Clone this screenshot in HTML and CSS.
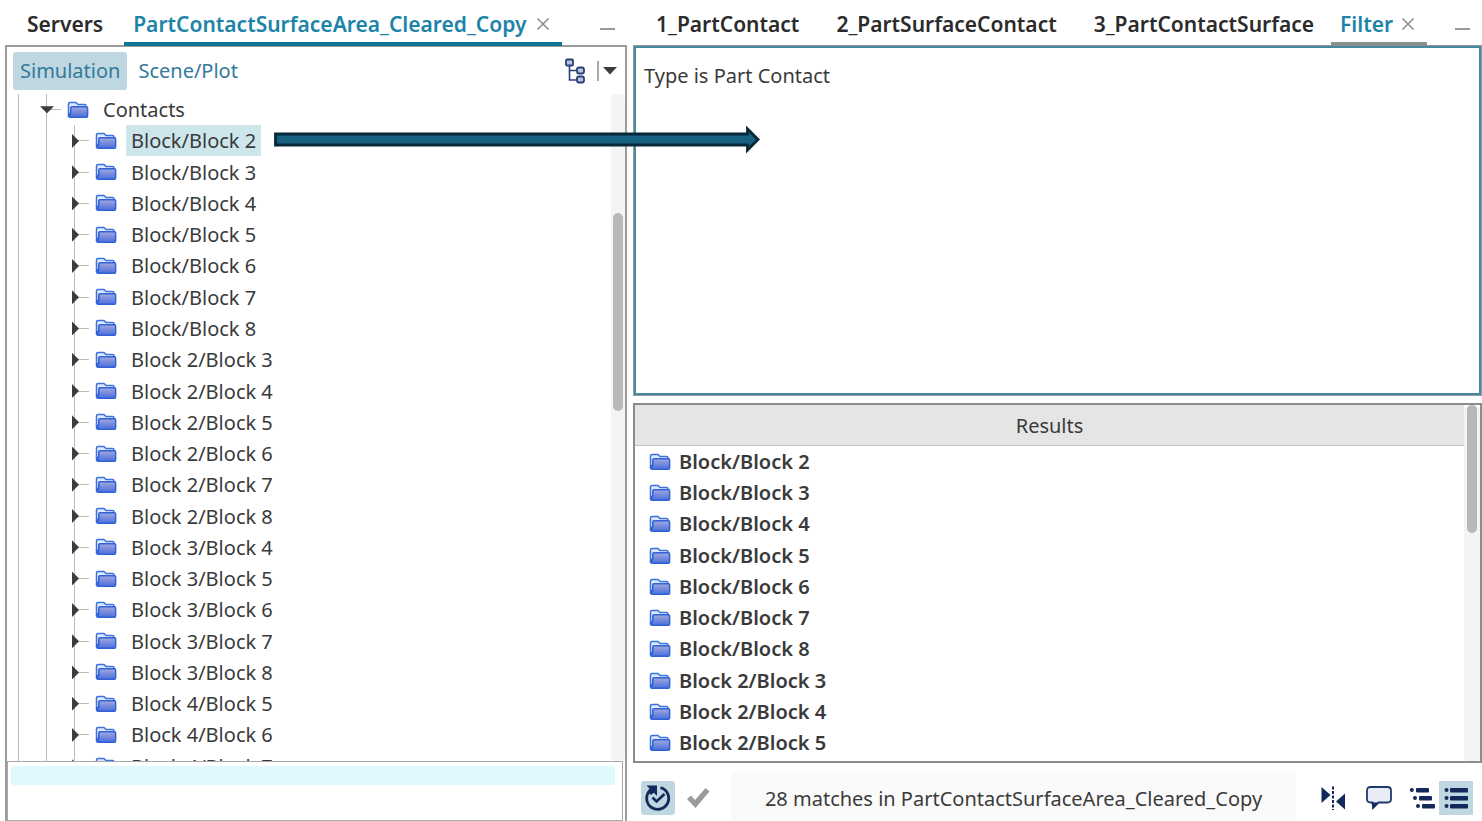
FILE: index.html
```
<!DOCTYPE html>
<html lang="en">
<head>
<meta charset="utf-8">
<title>Simulation filter</title>
<link rel="stylesheet" href="styles.css">
</head>
<body>
<svg class="defs" aria-hidden="true">
  <defs>
    <linearGradient id="folder-front" x1="0" y1="0" x2="0" y2="1">
      <stop offset="0" stop-color="#a3a8dc"/>
      <stop offset="1" stop-color="#4a6fdc"/>
    </linearGradient>
    <symbol id="folder" viewBox="0 0 22 18">
      <path d="M1.500 14.500V3Q1.500 1.500 3 1.500H9L11 3.500H17.500Q19 3.500 19 5V14.500Z" fill="#dfe9fd" stroke="#3c72df" stroke-width="1.500"/>
      <path d="M1.500 13L4 10V15H1.500Z" fill="#2f62d6"/>
      <path d="M5 5.800H19.500Q20.600 5.800 20.600 7V15Q20.600 16.300 19.400 16.300H3Q1.800 16.300 1.600 15Q3.800 14 3.800 12V7Q3.800 5.800 5 5.800Z" fill="url(#folder-front)" stroke="#2f62d6" stroke-width="1.500"/>
    </symbol>
    <symbol id="close" viewBox="0 0 14 14">
      <path d="M1.500 1.500L12.500 12.500M12.500 1.500L1.500 12.500" fill="none" stroke="#8c8c8c" stroke-width="1.500"/>
    </symbol>
  </defs>
</svg>

<main class="workspace">
  <section class="pane" aria-label="Simulation">
    <div class="tabs tabs-left">
      <button class="tab">Servers</button>
      <div class="tab-active">
        <button class="tab">PartContactSurfaceArea_Cleared_Copy</button>
        <button class="icon-button" aria-label="Close tab"><svg class="close-icon"><use href="#close"/></svg></button>
      </div>
      <button class="minimize" aria-label="Minimize"></button>
    </div>
    <div class="explorer">
      <div class="toolbar">
        <button class="mode mode-on">Simulation</button>
        <button class="mode">Scene/Plot</button>
        <button class="icon-button tree-button" aria-label="Tree layout">
          <svg width="20" height="26" viewBox="0 0 20 26" fill="#b9c3da" stroke="#2a4279" stroke-width="1.800">
            <path d="M4.500 7V22H12M4.500 12.500H12" fill="none" stroke-width="1.600"/>
            <rect x="1" y="1.500" width="7" height="6" rx="1"/>
            <rect x="12" y="9.500" width="7" height="6" rx="2"/>
            <rect x="12" y="18.500" width="7" height="6" rx="2"/>
          </svg>
        </button>
        <button class="icon-button menu-button" aria-label="More options">
          <svg width="14" height="8" viewBox="0 0 14 8"><path d="M0 0H14L7 7.500Z" fill="#3c3c3c"/></svg>
        </button>
      </div>
      <div class="tree-area">
        <ul class="tree">
          <li class="node parent"><button class="open" aria-label="Collapse"></button><svg class="folder"><use href="#folder"/></svg><span>Contacts</span></li>
          <li class="node"><button class="twist" aria-label="Expand"></button><svg class="folder"><use href="#folder"/></svg><span class="selected">Block/Block 2</span></li>
          <li class="node"><button class="twist" aria-label="Expand"></button><svg class="folder"><use href="#folder"/></svg><span>Block/Block 3</span></li>
          <li class="node"><button class="twist" aria-label="Expand"></button><svg class="folder"><use href="#folder"/></svg><span>Block/Block 4</span></li>
          <li class="node"><button class="twist" aria-label="Expand"></button><svg class="folder"><use href="#folder"/></svg><span>Block/Block 5</span></li>
          <li class="node"><button class="twist" aria-label="Expand"></button><svg class="folder"><use href="#folder"/></svg><span>Block/Block 6</span></li>
          <li class="node"><button class="twist" aria-label="Expand"></button><svg class="folder"><use href="#folder"/></svg><span>Block/Block 7</span></li>
          <li class="node"><button class="twist" aria-label="Expand"></button><svg class="folder"><use href="#folder"/></svg><span>Block/Block 8</span></li>
          <li class="node"><button class="twist" aria-label="Expand"></button><svg class="folder"><use href="#folder"/></svg><span>Block 2/Block 3</span></li>
          <li class="node"><button class="twist" aria-label="Expand"></button><svg class="folder"><use href="#folder"/></svg><span>Block 2/Block 4</span></li>
          <li class="node"><button class="twist" aria-label="Expand"></button><svg class="folder"><use href="#folder"/></svg><span>Block 2/Block 5</span></li>
          <li class="node"><button class="twist" aria-label="Expand"></button><svg class="folder"><use href="#folder"/></svg><span>Block 2/Block 6</span></li>
          <li class="node"><button class="twist" aria-label="Expand"></button><svg class="folder"><use href="#folder"/></svg><span>Block 2/Block 7</span></li>
          <li class="node"><button class="twist" aria-label="Expand"></button><svg class="folder"><use href="#folder"/></svg><span>Block 2/Block 8</span></li>
          <li class="node"><button class="twist" aria-label="Expand"></button><svg class="folder"><use href="#folder"/></svg><span>Block 3/Block 4</span></li>
          <li class="node"><button class="twist" aria-label="Expand"></button><svg class="folder"><use href="#folder"/></svg><span>Block 3/Block 5</span></li>
          <li class="node"><button class="twist" aria-label="Expand"></button><svg class="folder"><use href="#folder"/></svg><span>Block 3/Block 6</span></li>
          <li class="node"><button class="twist" aria-label="Expand"></button><svg class="folder"><use href="#folder"/></svg><span>Block 3/Block 7</span></li>
          <li class="node"><button class="twist" aria-label="Expand"></button><svg class="folder"><use href="#folder"/></svg><span>Block 3/Block 8</span></li>
          <li class="node"><button class="twist" aria-label="Expand"></button><svg class="folder"><use href="#folder"/></svg><span>Block 4/Block 5</span></li>
          <li class="node"><button class="twist" aria-label="Expand"></button><svg class="folder"><use href="#folder"/></svg><span>Block 4/Block 6</span></li>
          <li class="node"><button class="twist" aria-label="Expand"></button><svg class="folder"><use href="#folder"/></svg><span>Block 4/Block 7</span></li>
        </ul>
        <div class="track"><div class="thumb thumb-tree"></div></div>
      </div>
      <div class="properties"><div class="property-head"></div></div>
    </div>
  </section>

  <section class="pane" aria-label="Filter">
    <div class="tabs tabs-right">
      <button class="tab">1_PartContact</button>
      <button class="tab">2_PartSurfaceContact</button>
      <button class="tab">3_PartContactSurface</button>
      <div class="tab-active tab-gray">
        <button class="tab">Filter</button>
        <button class="icon-button" aria-label="Close tab"><svg class="close-icon"><use href="#close"/></svg></button>
      </div>
      <button class="minimize" aria-label="Minimize"></button>
    </div>
    <textarea class="query" aria-label="Filter query" spellcheck="false">Type is Part Contact</textarea>
    <div class="results">
      <div class="results-main">
        <h2 class="results-title">Results</h2>
        <ul class="matches">
          <li><svg class="folder"><use href="#folder"/></svg>Block/Block 2</li>
          <li><svg class="folder"><use href="#folder"/></svg>Block/Block 3</li>
          <li><svg class="folder"><use href="#folder"/></svg>Block/Block 4</li>
          <li><svg class="folder"><use href="#folder"/></svg>Block/Block 5</li>
          <li><svg class="folder"><use href="#folder"/></svg>Block/Block 6</li>
          <li><svg class="folder"><use href="#folder"/></svg>Block/Block 7</li>
          <li><svg class="folder"><use href="#folder"/></svg>Block/Block 8</li>
          <li><svg class="folder"><use href="#folder"/></svg>Block 2/Block 3</li>
          <li><svg class="folder"><use href="#folder"/></svg>Block 2/Block 4</li>
          <li><svg class="folder"><use href="#folder"/></svg>Block 2/Block 5</li>
        </ul>
      </div>
      <div class="track track-results"><div class="thumb thumb-results"></div></div>
    </div>
    <div class="footer">
      <button class="icon-button tool tool-on" aria-label="Auto apply">
        <svg width="28" height="28" viewBox="0 0 28 28" fill="none" stroke="#13295c">
          <path d="M16.500 3.700A11 11 0 1 1 5.700 6.800" stroke-width="2.800"/>
          <path d="M2.500 1.500H13V12L9.800 8.800L7 11L3.500 7.500L5.500 4.500Z" fill="#13295c" stroke="none"/>
          <path d="M8.500 13.500L12.500 17.500L20.500 10" stroke-width="2.600"/>
        </svg>
      </button>
      <button class="icon-button tool" aria-label="Apply">
        <svg width="24" height="22" viewBox="0 0 24 22"><path d="M1 12L5 8.500L9 13L19.500 1L23.500 4.500L9.500 21Z" fill="#9b9b9b"/></svg>
      </button>
      <output class="status">28 matches in PartContactSurfaceArea_Cleared_Copy</output>
      <div class="actions">
        <button class="icon-button tool" aria-label="Mirror">
          <svg width="26" height="26" viewBox="0 0 26 26" fill="#13295c">
            <path d="M1.500 2L10.500 10L1.500 18Z"/><path d="M25 8.500V24.500L16 16.500Z"/>
            <path d="M13 1.500V25" stroke="#13295c" stroke-width="2" stroke-dasharray="3 1.500"/>
          </svg>
        </button>
        <button class="icon-button tool tool-note" aria-label="Comment">
          <svg width="26" height="26" viewBox="0 0 26 26"><path d="M4.500 2H21.500Q25 2 25 5.500V14Q25 17.500 21.500 17.500H12.500L7 23L6.500 17.500H4.500Q1 17.500 1 14V5.500Q1 2 4.500 2Z" fill="#e9ebf6" stroke="#21386f" stroke-width="1.800"/><path d="M6 17.500H12.500L7 23.500Z" fill="#13295c"/></svg>
        </button>
        <button class="icon-button tool" aria-label="Tree view">
          <svg width="26" height="22" viewBox="0 0 26 22" fill="#13295c">
            <circle cx="2.800" cy="3" r="2"/><rect x="7" y="1" width="13" height="4.500" rx="1"/>
            <circle cx="6" cy="11" r="2"/><rect x="10" y="9" width="13" height="4.500" rx="1"/>
            <circle cx="9" cy="19" r="2"/><rect x="13" y="17" width="13" height="4.500" rx="1"/>
          </svg>
        </button>
        <button class="icon-button tool tool-on tool-square" aria-label="List view">
          <svg width="24" height="22" viewBox="0 0 24 22" fill="#13295c">
            <circle cx="2.500" cy="3" r="2"/><rect x="6" y="1" width="18" height="4.500" rx="1"/>
            <circle cx="2.500" cy="11" r="2"/><rect x="6" y="9" width="18" height="4.500" rx="1"/>
            <circle cx="2.500" cy="19" r="2"/><rect x="6" y="17" width="18" height="4.500" rx="1"/>
          </svg>
        </button>
      </div>
    </div>
  </section>

  <svg class="arrow" viewBox="0 0 488 30" aria-hidden="true">
    <path d="M2.500 9H474.500V4L485 14.500L474.500 25V20H2.500Z" fill="#176082" stroke="#062838" stroke-width="2.800"/>
  </svg>
</main>
</body>
</html>
```
FILE: styles.css
```
* { box-sizing: border-box; }

body {
  margin: 0;
  background: #fff;
  color: #3a3a3a;
  font: 20px/28px "Noto Sans", "Open Sans", sans-serif;
}

button {
  margin: 0;
  padding: 0;
  border: 0;
  background: none;
  color: inherit;
  font: inherit;
  white-space: nowrap;
}

ul { margin: 0; padding: 0; list-style: none; }
svg { display: block; }
.defs { position: absolute; width: 0; height: 0; }

.workspace {
  position: relative;
  display: grid;
  grid-template-columns: 622fr 849fr;
  column-gap: 6px;
  height: 100vh;
  padding-left: 5px;
}

.pane { display: flex; flex-direction: column; min-width: 0; min-height: 0; }

/* Tab strips */
.tabs { display: flex; flex: none; height: 45px; color: #2b2b2b; font-size: 21px; font-weight: 600; }
.tabs-left { padding: 0 12px 0 22px; gap: 21px; }
.tabs-right { padding: 0 12px 0 23px; gap: 37px; }
.tab { flex: none; height: 48px; }

.tab-active {
  z-index: 1;
  display: flex;
  flex: none;
  align-items: flex-start;
  gap: 10px;
  height: 46px;
  padding: 0 12px 0 9px;
  border-bottom: 4px solid #0f7596;
  color: #1c84a8;
}
.tab-gray { gap: 8px; margin: 0 -20px; border-bottom-color: #8a8f91; }
.icon-button { display: flex; flex: none; align-items: center; justify-content: center; }
.close-icon { width: 14px; height: 14px; }
.tab-active .icon-button { height: 48px; }
.minimize {
  flex: none;
  width: 15px;
  height: 30px;
  margin-left: auto;
  border-bottom: 2px solid #999;
}

/* Explorer */
.explorer {
  display: flex;
  flex: 1;
  flex-direction: column;
  min-height: 0;
  border: 2px solid #9c9c9c;
  border-bottom: 0;
}
.toolbar { display: flex; flex: none; align-items: center; height: 47px; padding: 0 8px 0 6px; gap: 4px; color: #33799b; }
.mode { height: 38px; padding: 0 7px; border-radius: 3px; }
.mode-on { background: #bfd7e1; }
.tree-button { margin-left: auto; }
.menu-button { height: 20px; margin-left: 8px; padding-left: 4px; border-left: 2px solid #a8a8a8; }

.tree-area { display: flex; flex: 1; min-height: 0; overflow: hidden; }
.tree {
  display: flex;
  flex: 1;
  flex-direction: column;
  margin-bottom: -21px;
  background:
    linear-gradient(#bcbcbc, #bcbcbc) 11px 0 / 1px 100% no-repeat,
    linear-gradient(#bcbcbc, #bcbcbc) 39px 0 / 1px 100% no-repeat;
}
.node {
  display: flex;
  flex: 1;
  align-items: center;
  padding-left: 65px;
  background:
    linear-gradient(#bcbcbc, #bcbcbc) 67px 0 / 1px 100% no-repeat,
    linear-gradient(#bcbcbc, #bcbcbc) 67px 50% / 15px 1px no-repeat;
}
.parent {
  padding-left: 33px;
  background: linear-gradient(#bcbcbc, #bcbcbc) 39px 50% / 15px 1px no-repeat;
}
.twist { width: 7px; height: 14px; margin-right: 16px; background: #3c3c3c; clip-path: polygon(0 0, 100% 50%, 0 100%); }
.open { width: 14px; height: 7px; margin-right: 13px; background: #3c3c3c; clip-path: polygon(0 0, 100% 0, 50% 100%); }
.folder { flex: none; width: 22px; height: 18px; }
.node span { margin-left: 9px; padding: 0 5px; line-height: 31px; }
.node .selected { background: #cde6ec; }

.track { flex: none; width: 14px; background: #f4f4f4; border-radius: 5px; }
.track-results { width: 16px; }
.thumb { width: 10px; margin: 0 auto; border-radius: 5px; background: #b8b8b8; }
.thumb-tree { height: 198px; margin-top: 119px; }
.thumb-results { height: 128px; }

.properties { flex: none; height: 60px; margin-right: 2px; padding: 4px 7px 0 3px; border: 1px solid #a8a8a8; }
.property-head { height: 19px; border-radius: 3px; background: #e0f9ff; }

/* Filter */
.query {
  flex: none;
  width: 100%;
  height: 351px;
  padding: 14px 8px;
  border: 3px solid #4588a1;
  outline: 1px solid #9a9a9a;
  outline-offset: -1px;
  background: #fff;
  color: #3a3a3a;
  font: inherit;
  resize: none;
}
.results { display: flex; flex: 1; min-height: 0; margin-top: 7px; border: 2px solid #8c8c8c; }
.results-main { display: flex; flex: 1; flex-direction: column; }
.results-title {
  flex: none;
  margin: 0;
  padding: 7px 0 5px;
  border-bottom: 1px solid #c4c4c4;
  background: #e5e5e5;
  font-size: 20px;
  font-weight: 400;
  text-align: center;
}
.matches { display: flex; flex: 1; flex-direction: column; padding-bottom: 2px; font-weight: 600; }
.matches li { display: flex; flex: 1; align-items: center; gap: 8px; padding-left: 14px; }

.footer { display: flex; flex: none; align-items: flex-end; height: 58px; padding: 0 9px 0 8px; }
.tool { width: 34px; height: 34px; margin-bottom: 6px; border-radius: 3px; }
.tool + .tool { margin-left: 6px; }
.tool-on { background: #bfd7e1; }
.tool-square { border-radius: 0; }
.status { flex: 1; height: 50px; margin-left: 16px; background: #fafafa; line-height: 56px; text-align: center; }
.actions { display: flex; margin-left: 20px; }
.actions .tool + .tool { margin-left: 0; }
.actions .tool + .tool-note { margin: 0 9px 6px 12px; }

/* Annotation spanning both panes */
.arrow { position: absolute; top: 125px; left: 273px; z-index: 2; width: 488px; height: 30px; pointer-events: none; }
```
